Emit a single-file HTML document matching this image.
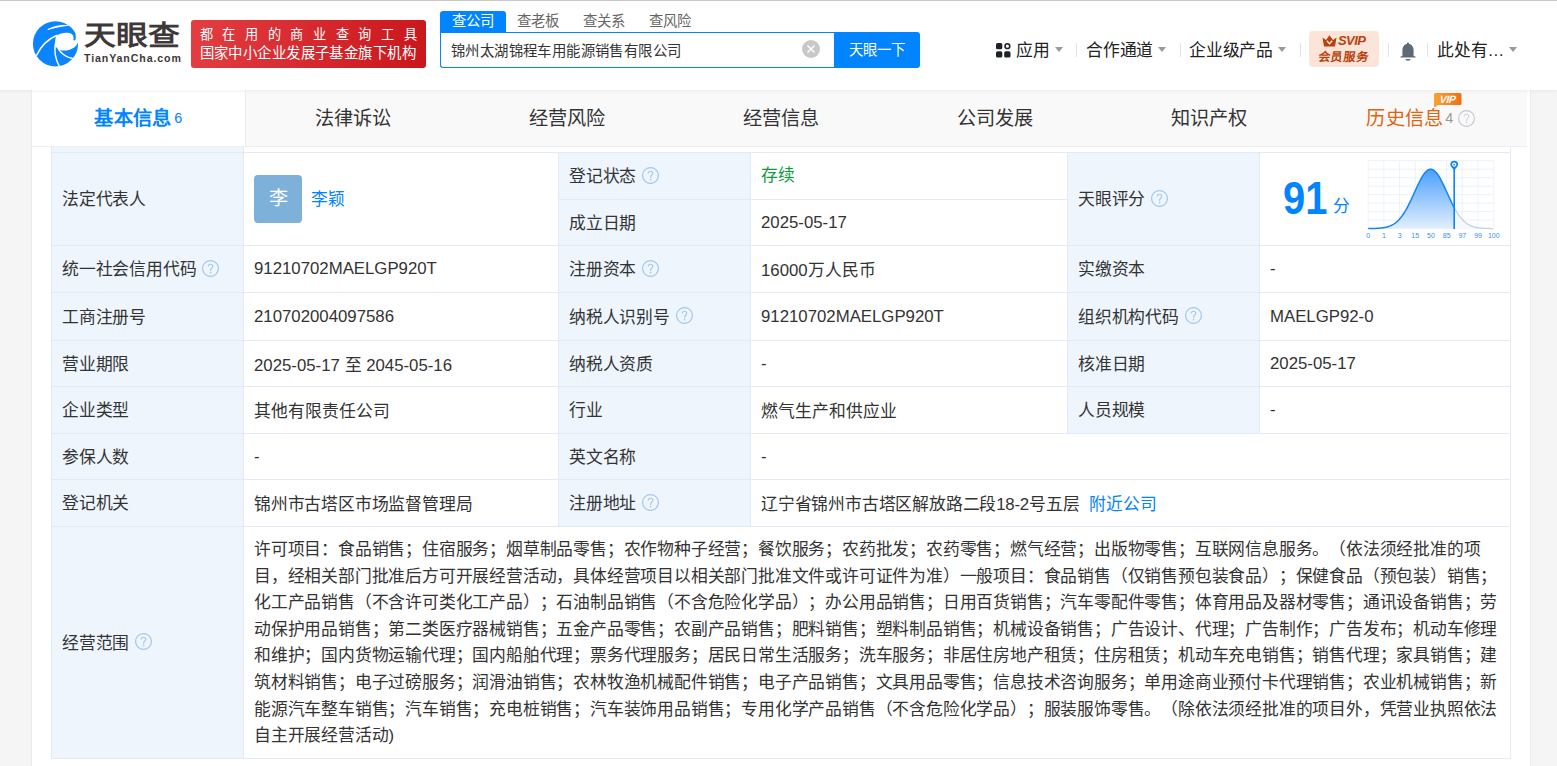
<!DOCTYPE html>
<html lang="zh-CN"><head><meta charset="utf-8">
<style>
*{box-sizing:border-box;margin:0;padding:0}
html,body{width:1557px;height:766px;overflow:hidden}
body{background:#f5f5f5;font-family:"Liberation Sans",sans-serif;color:#333;position:relative;text-spacing-trim:space-all}
.abs{position:absolute}
#hdr{position:absolute;left:0;top:0;width:1557px;height:90px;background:#fff;z-index:5;box-shadow:0 1px 4px rgba(0,0,0,.06)}
#cont{position:absolute;left:31px;top:90px;width:1500px;height:700px;background:#fff;border-left:1px solid #ececec;border-right:1px solid #ececec}
#tabs{position:absolute;left:32px;top:90px;width:1495px;height:57px;background:#f9f9f9;border-bottom:1px solid #eee;z-index:3}
.tab{position:absolute;top:0;height:56px;width:214px;text-align:center;line-height:58px;font-size:19.2px;color:#333;letter-spacing:0.2px}
#tbl{position:absolute;left:51px;top:147px;width:1460px;height:612px;background:#fff}
.lb{position:absolute;background:#eef5fd}
.hl{position:absolute;height:1px;background:#e2ebf5}
.vl{position:absolute;width:1px;background:#e2ebf5}
.c{position:absolute;display:flex;align-items:center;font-size:16.8px;color:#333;white-space:nowrap;letter-spacing:-0.2px}
.q{display:inline-block;width:17px;height:17px;margin-left:6px;flex:none}
.nav{top:39px;font-size:16.8px;line-height:24px;color:#222;white-space:nowrap;letter-spacing:-0.2px}
.caret{top:47px;width:0;height:0;border-left:4.5px solid transparent;border-right:4.5px solid transparent;border-top:5.5px solid #9a9a9a}
.sep{top:43px;width:1px;height:14px;background:#dfe3ea}
.av{display:inline-block;width:48px;height:48px;border-radius:4px;background:#7eb1da;color:#fff;font-size:19.2px;line-height:48px;text-align:center}
.scope{position:absolute;font-size:16.8px;line-height:26.6px;color:#333;white-space:normal;word-break:break-all;letter-spacing:-0.2px}
</style></head><body>
<div id="hdr">
  <div class="abs" style="left:0;top:0;width:1557px;height:1px;background:#c9c9c9"></div>
  <svg class="abs" style="left:30px;top:19px" width="50" height="50" viewBox="0 0 50 50">
    <circle cx="25.5" cy="24.8" r="22.6" fill="#0a84ff"/>
    <path d="M26.6,16.6 C31,13.4 38,12.6 41.8,15.1 C43.7,16.5 44,19 43.3,21 C43.9,21.7 44.9,21.6 45.4,20.7 C46,19 45.9,17 45.4,15.3 L50,15 L50,23 L48.3,23 C46,28.5 40.5,31.6 34.5,31.6 C31,31.5 29.3,30.9 28.4,30.3 C26,28.6 24.9,26.5 25,24.8 C25.1,21 25.6,18.3 26.6,16.6 Z" fill="#fff"/>
    <path d="M6.3,36.8 C11,27 18,20 27,16.3" stroke="#fff" stroke-width="1.5" fill="none"/>
    <path d="M17.8,10.6 C23,7.6 30,5.9 38.2,6.4 C30,7.2 23.5,8.8 17.8,10.6 Z" stroke="#fff" stroke-width="0.9" stroke-linejoin="round" fill="#fff"/>
    <path d="M25.4,24.5 C24.1,32 25.3,40 29.4,47.5" stroke="#fff" stroke-width="1.5" fill="none"/>
    <path d="M28.4,30.2 C32,35.5 37,38.6 42.8,39.4" stroke="#fff" stroke-width="1.5" fill="none"/>
  </svg>
  <div class="abs" style="left:84px;top:19.5px;font-size:33px;font-weight:bold;color:#3e3839;line-height:40px;letter-spacing:0px;transform:scale(0.965,0.82);transform-origin:0 0">天眼查</div>
  <div class="abs" style="left:84px;top:51px;font-size:10.6px;font-weight:bold;color:#3e3839;line-height:14px;letter-spacing:0.9px">TianYanCha.com</div>
  <div class="abs" style="left:191px;top:20px;width:235px;height:48px;border-radius:3px;background:linear-gradient(100deg,#e33d42,#c9161c)"></div>
  <div class="abs" style="left:199.5px;top:26px;font-size:13.2px;color:#fff;line-height:17px;letter-spacing:9.7px;white-space:nowrap">都在用的商业查询工具</div>
  <div class="abs" style="left:199.5px;top:44px;font-size:14.4px;color:#fff;line-height:19px;letter-spacing:0.43px;white-space:nowrap">国家中小企业发展子基金旗下机构</div>
  <div class="abs" style="left:440px;top:11px;width:66px;height:22px;background:#0084ff;border-radius:3px 3px 0 0;color:#fff;font-size:14.4px;line-height:21px;text-align:center">查公司</div>
  <div class="abs" style="left:517px;top:11px;font-size:14.4px;line-height:21px;color:#666">查老板</div>
  <div class="abs" style="left:583px;top:11px;font-size:14.4px;line-height:21px;color:#666">查关系</div>
  <div class="abs" style="left:649px;top:11px;font-size:14.4px;line-height:21px;color:#666">查风险</div>
  <div class="abs" style="left:440px;top:32px;width:396px;height:36px;border:1px solid #0084ff;border-right:none;border-radius:0 0 0 3px;background:#fff"></div>
  <div class="abs" style="left:451px;top:40.5px;font-size:14.4px;line-height:21px;color:#333;white-space:nowrap;letter-spacing:0.4px">锦州太湖锦程车用能源销售有限公司</div>
  <div class="abs" style="left:802px;top:40px;width:18px;height:18px;border-radius:50%;background:#c8c8c8"></div>
  <svg class="abs" style="left:802px;top:40px" width="18" height="18" viewBox="0 0 18 18"><path d="M5.5,5.5 L12.5,12.5 M12.5,5.5 L5.5,12.5" stroke="#fff" stroke-width="1.5"/></svg>
  <div class="abs" style="left:834px;top:32px;width:86px;height:36px;background:#0084ff;border-radius:0 3px 3px 0;color:#fff;font-size:14.4px;line-height:36px;text-align:center">天眼一下</div>

  <svg class="abs" style="left:996px;top:43px" width="15" height="15" viewBox="0 0 15 15">
    <rect x="0" y="0" width="6.3" height="6.3" rx="1.6" fill="#1f2329"/>
    <circle cx="11.4" cy="3.15" r="2.35" fill="none" stroke="#1f2329" stroke-width="1.6"/>
    <rect x="0" y="8.2" width="6.3" height="6.3" rx="1.6" fill="#1f2329"/>
    <rect x="8.2" y="8.2" width="6.3" height="6.3" rx="1.6" fill="#1f2329"/>
  </svg>
  <div class="abs nav" style="left:1016px">应用</div>
  <div class="abs caret" style="left:1055px"></div>
  <div class="abs sep" style="left:1076px"></div>
  <div class="abs nav" style="left:1086px">合作通道</div>
  <div class="abs caret" style="left:1158px"></div>
  <div class="abs sep" style="left:1180px"></div>
  <div class="abs nav" style="left:1189px">企业级产品</div>
  <div class="abs caret" style="left:1278px"></div>
  <div class="abs sep" style="left:1300px"></div>
  <div class="abs" style="left:1309px;top:31px;width:70px;height:36px;background:#fde4d8;border-radius:4px"></div>
  <svg class="abs" style="left:1322px;top:35px" width="15" height="12" viewBox="0 0 15 12">
    <path d="M0.5,2.5 L4,5 L7.5,0.3 L11,5 L14.5,2.5 L13,11.5 L2,11.5 Z" fill="#b8420f"/>
    <path d="M4.8,5.8 L7.5,8.8 L10.2,5.8" stroke="#fde4d8" stroke-width="1.4" fill="none"/>
  </svg>
  <div class="abs" style="left:1338px;top:33px;font-size:13px;line-height:16px;font-weight:bold;font-style:italic;color:#b8420f;letter-spacing:-0.6px">SVIP</div>
  <div class="abs" style="left:1317px;top:49.2px;font-size:12px;line-height:17px;font-weight:bold;color:#b8420f;white-space:nowrap;letter-spacing:0.75px;transform:skewX(-7deg);transform-origin:0 100%">会员服务</div>
  <div class="abs sep" style="left:1388px"></div>
  <svg class="abs" style="left:1399px;top:42px" width="18" height="19" viewBox="0 0 18 19">
    <path d="M9,0.6 C9.8,0.6 10,1.1 10,1.7 C12.8,2.4 14.6,4.8 14.6,8 L14.6,14 L16.5,14.6 L16.5,15.6 L1.5,15.6 L1.5,14.6 L3.4,14 L3.4,8 C3.4,4.8 5.2,2.4 8,1.7 C8,1.1 8.2,0.6 9,0.6 Z" fill="#5f6a79"/>
    <rect x="6.5" y="17" width="5" height="1.6" rx="0.8" fill="#5f6a79"/>
  </svg>
  <div class="abs sep" style="left:1427px"></div>
  <div class="abs nav" style="left:1437px">此处有…</div>
  <div class="abs caret" style="left:1509px"></div>
</div>
<div id="cont"></div>
<div id="tabs">
  <div class="tab" style="left:0;width:214px;padding-left:0px;background:#fff;color:#0084ff;font-weight:bold;border-right:1px solid #ededed;height:56px">基本信息<span style="font-size:14.4px;font-weight:normal;margin-left:3px;position:relative;top:-2px">6</span></div>
  <div class="tab" style="left:214px">法律诉讼</div>
  <div class="tab" style="left:428px">经营风险</div>
  <div class="tab" style="left:642px">经营信息</div>
  <div class="tab" style="left:856px">公司发展</div>
  <div class="tab" style="left:1070px">知识产权</div>
  <div class="tab" style="left:1284px;color:#e0640f;padding-right:5px">历史信息<span style="font-size:14.4px;color:#999;margin-left:2px;position:relative;top:-2px">4</span><svg style="display:inline-block;vertical-align:-2px;margin-left:4px" width="17" height="17" viewBox="0 0 17 17"><circle cx="8.5" cy="8.5" r="7.9" fill="none" stroke="#c3c7cd" stroke-width="1.1"/><path d="M6.2,6.6 C6.2,5.1 7.2,4.2 8.5,4.2 C9.9,4.2 10.8,5.1 10.8,6.3 C10.8,8 8.6,8.1 8.6,10.4 L8.6,10.9" fill="none" stroke="#c3c7cd" stroke-width="1"/><circle cx="8.6" cy="12.6" r="0.75" fill="#c3c7cd"/></svg></div>
  <svg class="abs" style="left:1402px;top:3px" width="28" height="15" viewBox="0 0 28 15"><defs><linearGradient id="vg" x1="0" y1="0" x2="1" y2="0"><stop offset="0" stop-color="#f7a332"/><stop offset="1" stop-color="#f36d12"/></linearGradient></defs><path d="M0,1.5 Q0,0 1.5,0 L26,0 Q27.5,0 27.5,1.5 L27.5,10.5 Q27.5,12 26,12 L4,12 L1.2,14 L0,14 Z" fill="url(#vg)"/><text x="13.2" y="10" font-family="Liberation Sans" font-size="10.5" font-weight="bold" fill="#fff" text-anchor="middle" letter-spacing="-0.3" transform="skewX(-16) translate(2.5,0)">VIP</text></svg>
</div>
<div id="tbl">
<div class="lb" style="left:1px;top:0px;width:191px;height:5px"></div>
<div class="lb" style="left:1px;top:6px;width:191px;height:92px"></div>
<div class="lb" style="left:1px;top:99px;width:191px;height:46px"></div>
<div class="lb" style="left:1px;top:146px;width:191px;height:47px"></div>
<div class="lb" style="left:1px;top:194px;width:191px;height:45px"></div>
<div class="lb" style="left:1px;top:240px;width:191px;height:46px"></div>
<div class="lb" style="left:1px;top:287px;width:191px;height:45px"></div>
<div class="lb" style="left:1px;top:333px;width:191px;height:46px"></div>
<div class="lb" style="left:1px;top:380px;width:191px;height:231px"></div>
<div class="lb" style="left:508px;top:6px;width:191px;height:46px"></div>
<div class="lb" style="left:508px;top:53px;width:191px;height:45px"></div>
<div class="lb" style="left:508px;top:99px;width:191px;height:46px"></div>
<div class="lb" style="left:508px;top:146px;width:191px;height:47px"></div>
<div class="lb" style="left:508px;top:194px;width:191px;height:45px"></div>
<div class="lb" style="left:508px;top:240px;width:191px;height:46px"></div>
<div class="lb" style="left:508px;top:287px;width:191px;height:45px"></div>
<div class="lb" style="left:508px;top:333px;width:191px;height:46px"></div>
<div class="lb" style="left:1017px;top:6px;width:191px;height:92px"></div>
<div class="lb" style="left:1017px;top:99px;width:191px;height:46px"></div>
<div class="lb" style="left:1017px;top:146px;width:191px;height:47px"></div>
<div class="lb" style="left:1017px;top:194px;width:191px;height:45px"></div>
<div class="lb" style="left:1017px;top:240px;width:191px;height:46px"></div>
<div class="hl" style="left:0px;top:5px;width:1460px"></div>
<div class="hl" style="left:507px;top:52px;width:510px"></div>
<div class="hl" style="left:0px;top:98px;width:1460px"></div>
<div class="hl" style="left:0px;top:145px;width:1460px"></div>
<div class="hl" style="left:0px;top:193px;width:1460px"></div>
<div class="hl" style="left:0px;top:239px;width:1460px"></div>
<div class="hl" style="left:0px;top:286px;width:1460px"></div>
<div class="hl" style="left:0px;top:332px;width:1460px"></div>
<div class="hl" style="left:0px;top:379px;width:1460px"></div>
<div class="hl" style="left:0px;top:611px;width:1460px"></div>
<div class="vl" style="left:0px;top:0px;height:612px"></div>
<div class="vl" style="left:1459px;top:0px;height:612px"></div>
<div class="vl" style="left:192px;top:0px;height:612px"></div>
<div class="vl" style="left:507px;top:5px;height:375px"></div>
<div class="vl" style="left:699px;top:5px;height:375px"></div>
<div class="vl" style="left:1016px;top:5px;height:282px"></div>
<div class="vl" style="left:1208px;top:5px;height:282px"></div>
<div class="c" style="left:11px;top:99px;width:180px;height:46px;padding-bottom:2px">统一社会信用代码<svg class="q" width="17" height="17" viewBox="0 0 17 17"><circle cx="8.5" cy="8.5" r="7.9" fill="none" stroke="#a5caee" stroke-width="1.25"/><path d="M6.2,6.6 C6.2,5.1 7.2,4.2 8.5,4.2 C9.9,4.2 10.8,5.1 10.8,6.3 C10.8,8 8.6,8.1 8.6,10.4 L8.6,10.9" fill="none" stroke="#a5caee" stroke-width="1.15"/><circle cx="8.6" cy="12.6" r="0.85" fill="#a5caee"/></svg></div>
<div class="c" style="left:203px;top:99px;width:303px;height:46px;letter-spacing:0">91210702MAELGP920T</div>
<div class="c" style="left:518px;top:99px;width:180px;height:46px;padding-bottom:2px">注册资本<svg class="q" width="17" height="17" viewBox="0 0 17 17"><circle cx="8.5" cy="8.5" r="7.9" fill="none" stroke="#a5caee" stroke-width="1.25"/><path d="M6.2,6.6 C6.2,5.1 7.2,4.2 8.5,4.2 C9.9,4.2 10.8,5.1 10.8,6.3 C10.8,8 8.6,8.1 8.6,10.4 L8.6,10.9" fill="none" stroke="#a5caee" stroke-width="1.15"/><circle cx="8.6" cy="12.6" r="0.85" fill="#a5caee"/></svg></div>
<div class="c" style="left:710px;top:99px;width:305px;height:46px;letter-spacing:0">16000万人民币</div>
<div class="c" style="left:1027px;top:99px;width:180px;height:46px;padding-bottom:2px">实缴资本</div>
<div class="c" style="left:1219px;top:99px;width:239px;height:46px;letter-spacing:0">-</div>
<div class="c" style="left:11px;top:146px;width:180px;height:47px;padding-bottom:2px">工商注册号</div>
<div class="c" style="left:203px;top:146px;width:303px;height:47px;letter-spacing:0">210702004097586</div>
<div class="c" style="left:518px;top:146px;width:180px;height:47px;padding-bottom:2px">纳税人识别号<svg class="q" width="17" height="17" viewBox="0 0 17 17"><circle cx="8.5" cy="8.5" r="7.9" fill="none" stroke="#a5caee" stroke-width="1.25"/><path d="M6.2,6.6 C6.2,5.1 7.2,4.2 8.5,4.2 C9.9,4.2 10.8,5.1 10.8,6.3 C10.8,8 8.6,8.1 8.6,10.4 L8.6,10.9" fill="none" stroke="#a5caee" stroke-width="1.15"/><circle cx="8.6" cy="12.6" r="0.85" fill="#a5caee"/></svg></div>
<div class="c" style="left:710px;top:146px;width:305px;height:47px;letter-spacing:0">91210702MAELGP920T</div>
<div class="c" style="left:1027px;top:146px;width:180px;height:47px;padding-bottom:2px">组织机构代码<svg class="q" width="17" height="17" viewBox="0 0 17 17"><circle cx="8.5" cy="8.5" r="7.9" fill="none" stroke="#a5caee" stroke-width="1.25"/><path d="M6.2,6.6 C6.2,5.1 7.2,4.2 8.5,4.2 C9.9,4.2 10.8,5.1 10.8,6.3 C10.8,8 8.6,8.1 8.6,10.4 L8.6,10.9" fill="none" stroke="#a5caee" stroke-width="1.15"/><circle cx="8.6" cy="12.6" r="0.85" fill="#a5caee"/></svg></div>
<div class="c" style="left:1219px;top:146px;width:239px;height:47px;letter-spacing:0">MAELGP92-0</div>
<div class="c" style="left:11px;top:194px;width:180px;height:45px;padding-bottom:2px">营业期限</div>
<div class="c" style="left:203px;top:194px;width:303px;height:45px;letter-spacing:0">2025-05-17 至 2045-05-16</div>
<div class="c" style="left:518px;top:194px;width:180px;height:45px;padding-bottom:2px">纳税人资质</div>
<div class="c" style="left:710px;top:194px;width:305px;height:45px;letter-spacing:0">-</div>
<div class="c" style="left:1027px;top:194px;width:180px;height:45px;padding-bottom:2px">核准日期</div>
<div class="c" style="left:1219px;top:194px;width:239px;height:45px;letter-spacing:0">2025-05-17</div>
<div class="c" style="left:11px;top:240px;width:180px;height:46px;padding-bottom:2px">企业类型</div>
<div class="c" style="left:203px;top:240px;width:303px;height:46px;letter-spacing:0">其他有限责任公司</div>
<div class="c" style="left:518px;top:240px;width:180px;height:46px;padding-bottom:2px">行业</div>
<div class="c" style="left:710px;top:240px;width:305px;height:46px;letter-spacing:0">燃气生产和供应业</div>
<div class="c" style="left:1027px;top:240px;width:180px;height:46px;padding-bottom:2px">人员规模</div>
<div class="c" style="left:1219px;top:240px;width:239px;height:46px;letter-spacing:0">-</div>
<div class="c" style="left:11px;top:6px;width:180px;height:92px;padding-bottom:2px">法定代表人</div>
<div class="c" style="left:203px;top:6px;width:303px;height:92px;"><span class="av">李</span><span style="color:#0084ff;margin-left:9px;position:relative;top:-1px">李颖</span></div>
<div class="c" style="left:518px;top:6px;width:180px;height:46px;padding-bottom:2px">登记状态<svg class="q" width="17" height="17" viewBox="0 0 17 17"><circle cx="8.5" cy="8.5" r="7.9" fill="none" stroke="#a5caee" stroke-width="1.25"/><path d="M6.2,6.6 C6.2,5.1 7.2,4.2 8.5,4.2 C9.9,4.2 10.8,5.1 10.8,6.3 C10.8,8 8.6,8.1 8.6,10.4 L8.6,10.9" fill="none" stroke="#a5caee" stroke-width="1.15"/><circle cx="8.6" cy="12.6" r="0.85" fill="#a5caee"/></svg></div>
<div class="c" style="left:710px;top:6px;width:305px;height:46px;padding-bottom:4px"><span style="color:#0c9c3e">存续</span></div>
<div class="c" style="left:518px;top:53px;width:180px;height:45px;padding-bottom:2px">成立日期</div>
<div class="c" style="left:710px;top:53px;width:305px;height:45px;letter-spacing:0">2025-05-17</div>
<div class="c" style="left:1027px;top:6px;width:180px;height:92px;padding-bottom:2px">天眼评分<svg class="q" width="17" height="17" viewBox="0 0 17 17"><circle cx="8.5" cy="8.5" r="7.9" fill="none" stroke="#a5caee" stroke-width="1.25"/><path d="M6.2,6.6 C6.2,5.1 7.2,4.2 8.5,4.2 C9.9,4.2 10.8,5.1 10.8,6.3 C10.8,8 8.6,8.1 8.6,10.4 L8.6,10.9" fill="none" stroke="#a5caee" stroke-width="1.15"/><circle cx="8.6" cy="12.6" r="0.85" fill="#a5caee"/></svg></div>
<div class="c" style="left:1219px;top:6px;width:239px;height:92px;"></div>
<div class="c" style="left:11px;top:287px;width:180px;height:45px;padding-bottom:2px">参保人数</div>
<div class="c" style="left:203px;top:287px;width:303px;height:45px;">-</div>
<div class="c" style="left:518px;top:287px;width:180px;height:45px;padding-bottom:2px">英文名称</div>
<div class="c" style="left:710px;top:287px;width:748px;height:45px;">-</div>
<div class="c" style="left:11px;top:333px;width:180px;height:46px;padding-bottom:2px">登记机关</div>
<div class="c" style="left:203px;top:333px;width:303px;height:46px;">锦州市古塔区市场监督管理局</div>
<div class="c" style="left:518px;top:333px;width:180px;height:46px;padding-bottom:2px">注册地址<svg class="q" width="17" height="17" viewBox="0 0 17 17"><circle cx="8.5" cy="8.5" r="7.9" fill="none" stroke="#a5caee" stroke-width="1.25"/><path d="M6.2,6.6 C6.2,5.1 7.2,4.2 8.5,4.2 C9.9,4.2 10.8,5.1 10.8,6.3 C10.8,8 8.6,8.1 8.6,10.4 L8.6,10.9" fill="none" stroke="#a5caee" stroke-width="1.15"/><circle cx="8.6" cy="12.6" r="0.85" fill="#a5caee"/></svg></div>
<div class="c" style="left:710px;top:333px;width:748px;height:46px;">辽宁省锦州市古塔区解放路二段18-2号五层<span style="color:#0084ff;margin-left:10px">附近公司</span></div>
<div class="c" style="left:11px;top:380px;width:180px;height:231px;padding-bottom:2px">经营范围<svg class="q" width="17" height="17" viewBox="0 0 17 17"><circle cx="8.5" cy="8.5" r="7.9" fill="none" stroke="#a5caee" stroke-width="1.25"/><path d="M6.2,6.6 C6.2,5.1 7.2,4.2 8.5,4.2 C9.9,4.2 10.8,5.1 10.8,6.3 C10.8,8 8.6,8.1 8.6,10.4 L8.6,10.9" fill="none" stroke="#a5caee" stroke-width="1.15"/><circle cx="8.6" cy="12.6" r="0.85" fill="#a5caee"/></svg></div>
<div class="scope" style="left:203px;top:390px;width:1245px">许可项目：食品销售；住宿服务；烟草制品零售；农作物种子经营；餐饮服务；农药批发；农药零售；燃气经营；出版物零售；互联网信息服务。（依法须经批准的项目，经相关部门批准后方可开展经营活动，具体经营项目以相关部门批准文件或许可证件为准）一般项目：食品销售（仅销售预包装食品）；保健食品（预包装）销售；化工产品销售（不含许可类化工产品）；石油制品销售（不含危险化学品）；办公用品销售；日用百货销售；汽车零配件零售；体育用品及器材零售；通讯设备销售；劳动保护用品销售；第二类医疗器械销售；五金产品零售；农副产品销售；肥料销售；塑料制品销售；机械设备销售；广告设计、代理；广告制作；广告发布；机动车修理和维护；国内货物运输代理；国内船舶代理；票务代理服务；居民日常生活服务；洗车服务；非居住房地产租赁；住房租赁；机动车充电销售；销售代理；家具销售；建筑材料销售；电子过磅服务；润滑油销售；农林牧渔机械配件销售；电子产品销售；文具用品零售；信息技术咨询服务；单用途商业预付卡代理销售；农业机械销售；新能源汽车整车销售；汽车销售；充电桩销售；汽车装饰用品销售；专用化学产品销售（不含危险化学品）；服装服饰零售。（除依法须经批准的项目外，凭营业执照依法自主开展经营活动)</div>
</div>
<div class="abs" style="left:1283px;top:168px;font-size:47px;font-weight:bold;color:#0084ff;line-height:60px;z-index:2;transform:scaleX(0.85);transform-origin:0 0">91</div>
<div class="abs" style="left:1333px;top:195px;font-size:16.8px;color:#0084ff;line-height:24px;z-index:2">分</div>
<svg class="abs" style="left:1362px;top:155px;z-index:2" width="140" height="87" viewBox="0 0 140 87">
<defs><linearGradient id="gf" x1="0" y1="0" x2="0" y2="1"><stop offset="0" stop-color="#4aa0fb"/><stop offset="1" stop-color="#e2effd"/></linearGradient></defs>
<g stroke="#ecf2fa" stroke-width="1"><line x1="6.20" y1="5.7" x2="6.20" y2="73.6" /><line x1="21.89" y1="5.7" x2="21.89" y2="73.6" /><line x1="37.58" y1="5.7" x2="37.58" y2="73.6" /><line x1="53.27" y1="5.7" x2="53.27" y2="73.6" /><line x1="68.96" y1="5.7" x2="68.96" y2="73.6" /><line x1="84.65" y1="5.7" x2="84.65" y2="73.6" /><line x1="100.34" y1="5.7" x2="100.34" y2="73.6" /><line x1="116.03" y1="5.7" x2="116.03" y2="73.6" /><line x1="131.72" y1="5.7" x2="131.72" y2="73.6" /><line x1="6.2" y1="5.70" x2="131.7" y2="5.70" /><line x1="6.2" y1="14.19" x2="131.7" y2="14.19" /><line x1="6.2" y1="22.68" x2="131.7" y2="22.68" /><line x1="6.2" y1="31.17" x2="131.7" y2="31.17" /><line x1="6.2" y1="39.66" x2="131.7" y2="39.66" /><line x1="6.2" y1="48.15" x2="131.7" y2="48.15" /><line x1="6.2" y1="56.64" x2="131.7" y2="56.64" /><line x1="6.2" y1="65.13" x2="131.7" y2="65.13" /><line x1="6.2" y1="73.62" x2="131.7" y2="73.62" /></g>
<path d="M6.20,73.56 L6.70,73.56 L7.20,73.55 L7.70,73.55 L8.20,73.54 L8.70,73.53 L9.20,73.52 L9.70,73.52 L10.20,73.51 L10.70,73.49 L11.20,73.48 L11.70,73.47 L12.20,73.45 L12.70,73.44 L13.20,73.42 L13.70,73.40 L14.20,73.38 L14.70,73.35 L15.20,73.33 L15.70,73.30 L16.20,73.27 L16.70,73.23 L17.20,73.20 L17.70,73.16 L18.20,73.11 L18.70,73.06 L19.20,73.01 L19.70,72.95 L20.20,72.89 L20.70,72.82 L21.20,72.75 L21.70,72.67 L22.20,72.58 L22.70,72.49 L23.20,72.39 L23.70,72.29 L24.20,72.17 L24.70,72.05 L25.20,71.91 L25.70,71.77 L26.20,71.62 L26.70,71.45 L27.20,71.28 L27.70,71.09 L28.20,70.89 L28.70,70.68 L29.20,70.45 L29.70,70.21 L30.20,69.95 L30.70,69.68 L31.20,69.39 L31.70,69.08 L32.20,68.76 L32.70,68.42 L33.20,68.06 L33.70,67.68 L34.20,67.28 L34.70,66.85 L35.20,66.41 L35.70,65.95 L36.20,65.46 L36.70,64.95 L37.20,64.42 L37.70,63.86 L38.20,63.28 L38.70,62.68 L39.20,62.05 L39.70,61.40 L40.20,60.72 L40.70,60.02 L41.20,59.29 L41.70,58.53 L42.20,57.76 L42.70,56.95 L43.20,56.13 L43.70,55.28 L44.20,54.40 L44.70,53.51 L45.20,52.59 L45.70,51.65 L46.20,50.69 L46.70,49.71 L47.20,48.71 L47.70,47.70 L48.20,46.66 L48.70,45.62 L49.20,44.56 L49.70,43.49 L50.20,42.41 L50.70,41.32 L51.20,40.22 L51.70,39.12 L52.20,38.01 L52.70,36.91 L53.20,35.81 L53.70,34.70 L54.20,33.61 L54.70,32.52 L55.20,31.45 L55.70,30.38 L56.20,29.33 L56.70,28.30 L57.20,27.29 L57.70,26.30 L58.20,25.33 L58.70,24.39 L59.20,23.48 L59.70,22.60 L60.20,21.75 L60.70,20.94 L61.20,20.17 L61.70,19.43 L62.20,18.74 L62.70,18.09 L63.20,17.49 L63.70,16.93 L64.20,16.42 L64.70,15.96 L65.20,15.55 L65.70,15.20 L66.20,14.89 L66.70,14.65 L67.20,14.45 L67.70,14.31 L68.20,14.23 L68.70,14.20 L69.20,14.23 L69.70,14.31 L70.20,14.45 L70.70,14.65 L71.20,14.89 L71.70,15.20 L72.20,15.55 L72.70,15.96 L73.20,16.42 L73.70,16.93 L74.20,17.49 L74.70,18.09 L75.20,18.74 L75.70,19.43 L76.20,20.17 L76.70,20.94 L77.20,21.75 L77.70,22.60 L78.20,23.48 L78.70,24.39 L79.20,25.33 L79.70,26.30 L80.20,27.29 L80.70,28.30 L81.20,29.33 L81.70,30.38 L82.20,31.45 L82.70,32.52 L83.20,33.61 L83.70,34.70 L84.20,35.81 L84.70,36.91 L85.20,38.01 L85.70,39.12 L86.20,40.22 L86.70,41.32 L87.20,42.41 L87.70,43.49 L88.20,44.56 L88.70,45.62 L89.20,46.66 L89.70,47.70 L90.20,48.71 L90.70,49.71 L91.20,50.69 L91.70,51.65 L92.20,52.59 L92.20,52.59 L92.2,73.6 L6.2,73.6 Z" fill="url(#gf)"/>
<path d="M92.20,52.59 L92.70,53.51 L93.20,54.40 L93.70,55.28 L94.20,56.13 L94.70,56.95 L95.20,57.76 L95.70,58.53 L96.20,59.29 L96.70,60.02 L97.20,60.72 L97.70,61.40 L98.20,62.05 L98.70,62.68 L99.20,63.28 L99.70,63.86 L100.20,64.42 L100.70,64.95 L101.20,65.46 L101.70,65.95 L102.20,66.41 L102.70,66.85 L103.20,67.28 L103.70,67.68 L104.20,68.06 L104.70,68.42 L105.20,68.76 L105.70,69.08 L106.20,69.39 L106.70,69.68 L107.20,69.95 L107.70,70.21 L108.20,70.45 L108.70,70.68 L109.20,70.89 L109.70,71.09 L110.20,71.28 L110.70,71.45 L111.20,71.62 L111.70,71.77 L112.20,71.91 L112.70,72.05 L113.20,72.17 L113.70,72.29 L114.20,72.39 L114.70,72.49 L115.20,72.58 L115.70,72.67 L116.20,72.75 L116.70,72.82 L117.20,72.89 L117.70,72.95 L118.20,73.01 L118.70,73.06 L119.20,73.11 L119.70,73.16 L120.20,73.20 L120.70,73.23 L121.20,73.27 L121.70,73.30 L122.20,73.33 L122.70,73.35 L123.20,73.38 L123.70,73.40 L124.20,73.42 L124.70,73.44 L125.20,73.45 L125.70,73.47 L126.20,73.48 L126.70,73.49 L127.20,73.51 L127.70,73.52 L128.20,73.52 L128.70,73.53 L129.20,73.54 L129.70,73.55 L130.20,73.55 L130.70,73.56 L131.20,73.56 L131.7,73.6 L92.2,73.6 Z" fill="#f6f8fb"/>
<path d="M6.20,73.56 L6.70,73.56 L7.20,73.55 L7.70,73.55 L8.20,73.54 L8.70,73.53 L9.20,73.52 L9.70,73.52 L10.20,73.51 L10.70,73.49 L11.20,73.48 L11.70,73.47 L12.20,73.45 L12.70,73.44 L13.20,73.42 L13.70,73.40 L14.20,73.38 L14.70,73.35 L15.20,73.33 L15.70,73.30 L16.20,73.27 L16.70,73.23 L17.20,73.20 L17.70,73.16 L18.20,73.11 L18.70,73.06 L19.20,73.01 L19.70,72.95 L20.20,72.89 L20.70,72.82 L21.20,72.75 L21.70,72.67 L22.20,72.58 L22.70,72.49 L23.20,72.39 L23.70,72.29 L24.20,72.17 L24.70,72.05 L25.20,71.91 L25.70,71.77 L26.20,71.62 L26.70,71.45 L27.20,71.28 L27.70,71.09 L28.20,70.89 L28.70,70.68 L29.20,70.45 L29.70,70.21 L30.20,69.95 L30.70,69.68 L31.20,69.39 L31.70,69.08 L32.20,68.76 L32.70,68.42 L33.20,68.06 L33.70,67.68 L34.20,67.28 L34.70,66.85 L35.20,66.41 L35.70,65.95 L36.20,65.46 L36.70,64.95 L37.20,64.42 L37.70,63.86 L38.20,63.28 L38.70,62.68 L39.20,62.05 L39.70,61.40 L40.20,60.72 L40.70,60.02 L41.20,59.29 L41.70,58.53 L42.20,57.76 L42.70,56.95 L43.20,56.13 L43.70,55.28 L44.20,54.40 L44.70,53.51 L45.20,52.59 L45.70,51.65 L46.20,50.69 L46.70,49.71 L47.20,48.71 L47.70,47.70 L48.20,46.66 L48.70,45.62 L49.20,44.56 L49.70,43.49 L50.20,42.41 L50.70,41.32 L51.20,40.22 L51.70,39.12 L52.20,38.01 L52.70,36.91 L53.20,35.81 L53.70,34.70 L54.20,33.61 L54.70,32.52 L55.20,31.45 L55.70,30.38 L56.20,29.33 L56.70,28.30 L57.20,27.29 L57.70,26.30 L58.20,25.33 L58.70,24.39 L59.20,23.48 L59.70,22.60 L60.20,21.75 L60.70,20.94 L61.20,20.17 L61.70,19.43 L62.20,18.74 L62.70,18.09 L63.20,17.49 L63.70,16.93 L64.20,16.42 L64.70,15.96 L65.20,15.55 L65.70,15.20 L66.20,14.89 L66.70,14.65 L67.20,14.45 L67.70,14.31 L68.20,14.23 L68.70,14.20 L69.20,14.23 L69.70,14.31 L70.20,14.45 L70.70,14.65 L71.20,14.89 L71.70,15.20 L72.20,15.55 L72.70,15.96 L73.20,16.42 L73.70,16.93 L74.20,17.49 L74.70,18.09 L75.20,18.74 L75.70,19.43 L76.20,20.17 L76.70,20.94 L77.20,21.75 L77.70,22.60 L78.20,23.48 L78.70,24.39 L79.20,25.33 L79.70,26.30 L80.20,27.29 L80.70,28.30 L81.20,29.33 L81.70,30.38 L82.20,31.45 L82.70,32.52 L83.20,33.61 L83.70,34.70 L84.20,35.81 L84.70,36.91 L85.20,38.01 L85.70,39.12 L86.20,40.22 L86.70,41.32 L87.20,42.41 L87.70,43.49 L88.20,44.56 L88.70,45.62 L89.20,46.66 L89.70,47.70 L90.20,48.71 L90.70,49.71 L91.20,50.69 L91.70,51.65 L92.20,52.59 L92.20,52.59" stroke="#1584f5" stroke-width="1.5" fill="none"/>
<path d="M92.20,52.59 L92.70,53.51 L93.20,54.40 L93.70,55.28 L94.20,56.13 L94.70,56.95 L95.20,57.76 L95.70,58.53 L96.20,59.29 L96.70,60.02 L97.20,60.72 L97.70,61.40 L98.20,62.05 L98.70,62.68 L99.20,63.28 L99.70,63.86 L100.20,64.42 L100.70,64.95 L101.20,65.46 L101.70,65.95 L102.20,66.41 L102.70,66.85 L103.20,67.28 L103.70,67.68 L104.20,68.06 L104.70,68.42 L105.20,68.76 L105.70,69.08 L106.20,69.39 L106.70,69.68 L107.20,69.95 L107.70,70.21 L108.20,70.45 L108.70,70.68 L109.20,70.89 L109.70,71.09 L110.20,71.28 L110.70,71.45 L111.20,71.62 L111.70,71.77 L112.20,71.91 L112.70,72.05 L113.20,72.17 L113.70,72.29 L114.20,72.39 L114.70,72.49 L115.20,72.58 L115.70,72.67 L116.20,72.75 L116.70,72.82 L117.20,72.89 L117.70,72.95 L118.20,73.01 L118.70,73.06 L119.20,73.11 L119.70,73.16 L120.20,73.20 L120.70,73.23 L121.20,73.27 L121.70,73.30 L122.20,73.33 L122.70,73.35 L123.20,73.38 L123.70,73.40 L124.20,73.42 L124.70,73.44 L125.20,73.45 L125.70,73.47 L126.20,73.48 L126.70,73.49 L127.20,73.51 L127.70,73.52 L128.20,73.52 L128.70,73.53 L129.20,73.54 L129.70,73.55 L130.20,73.55 L130.70,73.56 L131.20,73.56" stroke="#c2d3e2" stroke-width="1.3" fill="none"/>
<line x1="92.2" y1="12" x2="92.2" y2="74" stroke="#0a84ff" stroke-width="1.6"/>
<path d="M92.2,15.5 C90.5,13 88.3,11.5 88.3,9.6 A3.9,3.9 0 1 1 96.1,9.6 C96.1,11.5 93.9,13 92.2,15.5 Z" fill="#0a84ff"/>
<circle cx="92.2" cy="9.6" r="2.1" fill="#fff"/><circle cx="92.2" cy="9.6" r="0.9" fill="#0a84ff"/>
<g font-family="Liberation Sans" font-size="7" font-weight="normal" fill="#3a8ff2" text-anchor="middle"><text x="6.20" y="82.6">0</text><text x="21.89" y="82.6">1</text><text x="37.58" y="82.6">3</text><text x="53.27" y="82.6">15</text><text x="68.96" y="82.6">50</text><text x="84.65" y="82.6">85</text><text x="100.34" y="82.6">97</text><text x="116.03" y="82.6">99</text><text x="131.72" y="82.6">100</text></g>
</svg>
</body></html>
